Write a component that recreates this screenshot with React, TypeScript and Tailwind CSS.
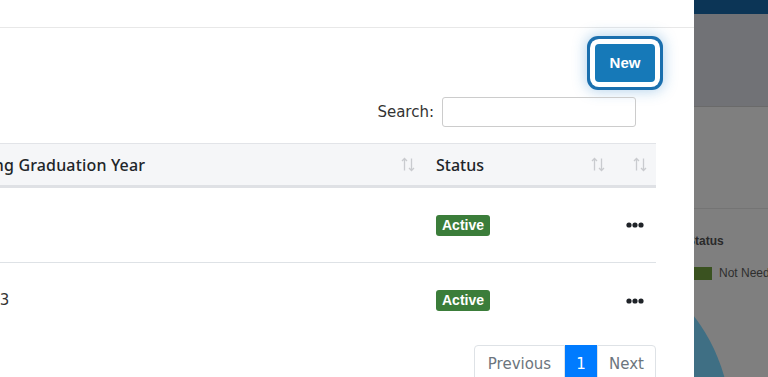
import React from 'react';

const body = { fontFamily: '"DejaVu Sans", "Noto Sans", sans-serif' };
const head = { fontFamily: '"Noto Sans", "Open Sans", sans-serif' };

function SortIcon() {
  return (
    <svg width="14" height="15" viewBox="0 0 14 15" fill="none" stroke="#c9cbcf" strokeWidth="1.3">
      <path d="M3.5 1.5v12M1 4l2.5-2.5L6 4" />
      <path d="M10.5 1.5v12M8 11l2.5 2.5L13 11" />
    </svg>
  );
}

function Dots() {
  return (
    <svg width="18" height="6" viewBox="0 0 18 6" fill="#1f2328">
      <circle cx="3" cy="3" r="2.6" />
      <circle cx="9" cy="3" r="2.6" />
      <circle cx="15" cy="3" r="2.6" />
    </svg>
  );
}

function Badge() {
  return (
    <span
      className="inline-flex h-[21px] w-[54px] items-center justify-center rounded-[3px] bg-[#3b7d3a] text-[14px] font-bold text-white"
      style={{ fontFamily: '"Liberation Sans", Arial, sans-serif' }}
    >
      Active
    </span>
  );
}

const rows = [
  { year: '', status: 'Active' },
  { year: '2023', status: 'Active' },
];

export default function App() {
  return (
    <div className="flex h-[377px] w-[768px] overflow-hidden bg-white" style={body}>
      {/* Modal panel */}
      <div className="flex w-[694px] shrink-0 flex-col bg-white">
        <div className="h-[28px] shrink-0 border-b border-[#e8e8e8]" />

        <div className="flex shrink-0 flex-col items-end pr-[38px]">
          <button
            className="mr-[1px] mt-[16px] h-[38px] w-[60px] rounded-[4px] bg-[#1679b8] text-[15px] font-bold text-white shadow-[0_0_0_5px_#ffffff,0_0_0_8px_#1a6fae,0_0_14px_9px_rgba(40,130,200,0.35)]"
            style={{ fontFamily: '"Liberation Sans", Arial, sans-serif' }}
          >
            New
          </button>

          <div className="mr-[20px] mt-[15px] flex items-center gap-[8px]">
            <label className="text-[15px] text-[#333]">Search:</label>
            <input className="h-[30px] w-[194px] rounded-[3px] border border-[#ccc] outline-none" />
          </div>
        </div>

        {/* Table */}
        <div className="mt-[16px] flex w-[656px] shrink-0 flex-col overflow-hidden">
          <div
            className="flex h-[45px] shrink-0 items-center border-y border-t-[#e2e4e8] border-b-[3px] border-b-[#dfe1e5] bg-[#f5f6f8] text-[16px] font-medium text-[#212529]"
            style={head}
          >
            <div className="flex w-[424px] shrink-0 items-center justify-between pr-[9px]">
              <span className="-ml-[66px] whitespace-nowrap tracking-[0.01em]">Upcoming Graduation Year</span>
              <SortIcon />
            </div>
            <div className="flex w-[190px] shrink-0 items-center justify-between pl-[12px] pr-[9px]">
              <span>Status</span>
              <SortIcon />
            </div>
            <div className="flex w-[42px] shrink-0 items-center justify-end pr-[9px]">
              <SortIcon />
            </div>
          </div>

          {rows.map((r, i) => (
            <div
              key={i}
              className="flex h-[75px] shrink-0 items-center border-b border-[#dee2e6] text-[15px] text-[#333] last:border-b-0"
            >
              <div className="w-[424px] shrink-0">
                <span className="-ml-[29px] whitespace-nowrap">{r.year}</span>
              </div>
              <div className="w-[190px] shrink-0 pl-[12px]">
                <Badge />
              </div>
              <div className="w-[42px] shrink-0 pl-[12px]">
                <Dots />
              </div>
            </div>
          ))}
        </div>

        <div className="flex shrink-0 justify-end pr-[38px] pt-[7px]">
          <div className="flex h-[38px] text-[15px]">
            <span className="flex w-[91px] items-center justify-center rounded-l-[4px] border border-[#dee2e6] text-[#6c757d]">
              Previous
            </span>
            <span className="flex w-[32px] items-center justify-center bg-[#007bff] text-white">1</span>
            <span className="flex w-[59px] items-center justify-center rounded-r-[4px] border border-[#dee2e6] text-[#6c757d]">
              Next
            </span>
          </div>
        </div>
      </div>

      {/* Dimmed page behind the modal */}
      <div
        className="relative flex flex-1 flex-col overflow-hidden bg-[#7f7f7f]"
        style={{ fontFamily: '"Liberation Sans", Arial, sans-serif' }}
      >
        <div className="h-[14px] shrink-0 bg-[#0c3556]" />
        <div className="h-[93px] shrink-0 border-b border-[#6a6a6a] bg-[#717276]" />
        <div className="h-[102px] shrink-0 border-b border-[#747474]" />
        <div className="-ml-[7px] mt-[23px] whitespace-nowrap text-[12px] font-bold text-[#2a2a2a]">Status</div>
        <div className="mt-[14px] flex items-center gap-[7px] whitespace-nowrap">
          <span className="h-[13px] w-[18px] shrink-0 bg-[#3a5220]" />
          <span className="text-[12px] text-[#2e2e2e]">Not Needed</span>
        </div>
        <svg className="absolute left-0 top-0" width="74" height="377">
          <circle cx="-141" cy="425" r="178" fill="#3f6f84" />
        </svg>
      </div>
    </div>
  );
}
